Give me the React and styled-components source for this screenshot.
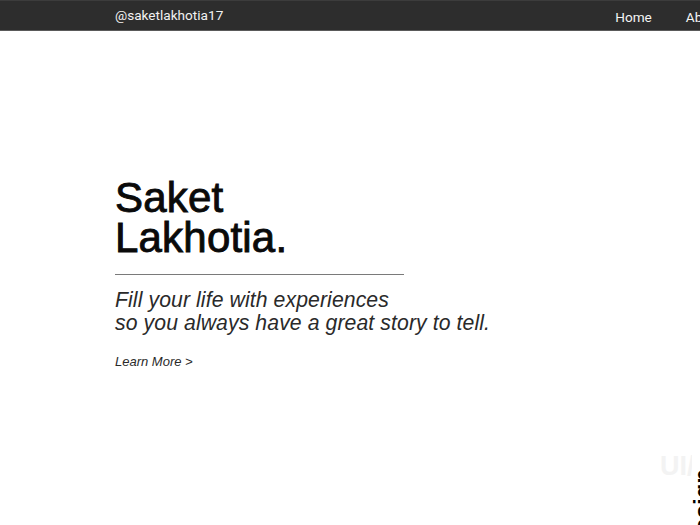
import React from "react";
import styled, { createGlobalStyle } from "styled-components";

const GlobalStyle = createGlobalStyle`
  html, body {
    margin: 0;
    padding: 0;
    background: #ffffff;
    overflow: hidden;
  }
`;

const Viewport = styled.div`
  width: 700px;
  height: 525px;
  overflow: hidden;
  background: #ffffff;
`;

const Page = styled.div`
  width: 837px;
`;

const NavBar = styled.nav`
  box-sizing: border-box;
  height: 31px;
  background: #2d2d2d;
  border-top: 1px solid #3c3c3c;
  border-bottom: 1px solid #5a5a5a;
  display: flex;
  align-items: center;
  justify-content: space-between;
  padding: 0 115px;
  font-family: Roboto, "Liberation Sans", sans-serif;
  font-size: 13.6px;
  color: #f2f2f2;
`;

const Handle = styled.span`
  padding-bottom: 2px;
`;

const NavLinks = styled.div`
  display: flex;
  gap: 34px;
  padding-top: 2px;
`;

const NavLink = styled.a`
  color: #f4f4f4;
  text-decoration: none;
`;

const Hero = styled.section`
  padding: 147px 0 0 115px;
  font-family: "Liberation Sans", Arial, sans-serif;
  color: #0a0a0a;
`;

const Name = styled.h1`
  margin: 0;
  font-size: 42px;
  line-height: 40px;
  font-weight: 400;
  letter-spacing: 0.2px;
  -webkit-text-stroke: 0.9px #0a0a0a;
`;

const Rule = styled.hr`
  width: 289px;
  margin: 16px 0 0 0;
  border: none;
  border-top: 1px solid #7a7a7a;
`;

const Tagline = styled.p`
  margin: 13px 0 0 0;
  font-size: 21.2px;
  line-height: 23px;
  font-style: italic;
  font-weight: 400;
  letter-spacing: 0.1px;
  color: #2a2a2a;
`;

const LearnMore = styled.a`
  display: block;
  margin-top: 20px;
  font-size: 13px;
  line-height: 16px;
  font-style: italic;
  color: #2a2a2a;
  text-decoration: none;
`;

const Showcase = styled.section`
  position: relative;
  margin: 81px 0 0 660px;
  height: 80px;
  font-family: "Liberation Sans", Arial, sans-serif;
`;

const Watermark = styled.div`
  width: 32px;
  overflow: hidden;
  white-space: nowrap;
  font-size: 27px;
  font-weight: 700;
  line-height: 30px;
  color: #f3f3f3;
`;

const SideLabel = styled.div`
  position: absolute;
  left: 30px;
  top: 18px;
  padding-right: 6px;
  writing-mode: vertical-rl;
  transform: rotate(180deg);
  font-size: 24px;
  font-weight: 700;
  color: #000000;
  line-height: 14px;
`;

export default function App() {
  return (
    <>
      <GlobalStyle />
      <Viewport>
        <Page>
          <NavBar>
            <Handle>@saketlakhotia17</Handle>
            <NavLinks>
              <NavLink href="#home">Home</NavLink>
              <NavLink href="#about">About</NavLink>
            </NavLinks>
          </NavBar>
          <Hero>
            <Name>
              Saket
              <br />
              Lakhotia.
            </Name>
            <Rule />
            <Tagline>
              Fill your life with experiences
              <br />
              so you always have a great story to tell.
            </Tagline>
            <LearnMore href="#about">Learn More &gt;</LearnMore>
          </Hero>
          <Showcase>
            <Watermark>UI/UX</Watermark>
            <SideLabel>Design</SideLabel>
          </Showcase>
        </Page>
      </Viewport>
    </>
  );
}
